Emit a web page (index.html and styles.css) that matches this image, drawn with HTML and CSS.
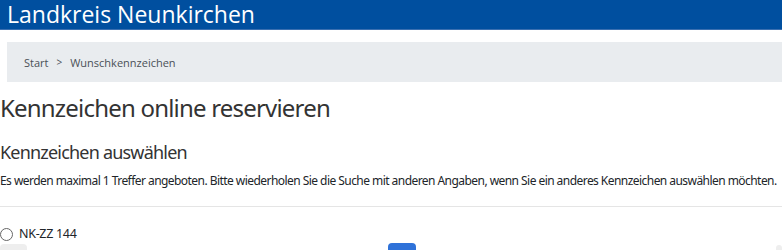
FILE: index.html
```html
<!DOCTYPE html>
<html lang="de">
<head>
	<meta charset="UTF-8"/>
	<meta name="viewport" content="width=device-width, initial-scale=1.0"/>
	<title>Wunschkennzeichen</title>
	<link rel="stylesheet" href="styles.css">
</head>
<body>
	<header class="top">
		<span class="brand">Landkreis Neunkirchen</span>
	</header>

	<nav class="crumbs">
		<a href="#">Start</a>
		<span class="sep">&gt;</span>
		<span>Wunschkennzeichen</span>
	</nav>

	<main class="content">
		<h1>Kennzeichen online reservieren</h1>
		<h2>Kennzeichen auswählen</h2>
		<p class="hint">Es werden maximal 1 Treffer angeboten. Bitte wiederholen Sie die Suche mit anderen Angaben, wenn Sie ein anderes Kennzeichen auswählen möchten.</p>
		<hr>
		<label class="choice"><input type="radio" name="kz"> NK-ZZ 144</label>
		<div class="actions">
			<button class="btn-back">&nbsp;</button>
			<button class="btn-go">&nbsp;</button>
			<button class="btn-side">&nbsp;</button>
		</div>
	</main>
</body>
</html>
```

FILE: styles.css
```css
*{
	margin: 0;
	padding: 0;
	box-sizing: border-box;
}
body{
	font-family: "Noto Sans", "Open Sans", sans-serif;
	color: #212529;
	overflow: hidden;
	height: 250px;
}
.top{
	background: #004f9f;
	height: 30px;
	padding-left: 7px;
	border-bottom: 1px solid #3a6fb0;
}
.brand{
	color: #fff;
	font-family: "Open Sans", sans-serif;
	font-size: 23px;
	line-height: 29px;
}
.crumbs{
	background: #e9ecef;
	margin: 12px 0 0 7px;
	height: 40px;
	padding: 0 17px;
	display: flex;
	align-items: center;
	gap: 8px;
	font-family: "Open Sans", sans-serif;
	font-size: 11px;
	color: #495057;
}
.crumbs a{
	color: #495057;
	text-decoration: none;
}
.sep{
	font-size: 10px;
}
.content{
	padding-top: 11px;
}
h1{
	font-size: 24px;
	font-weight: 400;
	color: #333;
	line-height: 30px;
	letter-spacing: -0.8px;
}
h2{
	font-size: 18px;
	font-weight: 400;
	color: #333;
	margin-top: 17px;
	line-height: 24px;
	letter-spacing: -0.8px;
}
.hint{
	font-size: 12px;
	margin-top: 8px;
	line-height: 18px;
	letter-spacing: -0.55px;
	white-space: nowrap;
}
hr{
	border: 0;
	border-top: 1px solid #e5e5e5;
	margin-top: 16px;
}
.choice{
	display: flex;
	align-items: center;
	gap: 6px;
	font-size: 12.5px;
	line-height: 18px;
	margin-top: 18px;
	letter-spacing: -0.3px;
}
.choice input{
	appearance: none;
	width: 13px;
	height: 13px;
	margin: 0;
	border: 1px solid #666;
	border-radius: 50%;
	background: #fff;
}
.actions{
	display: flex;
	justify-content: space-between;
}
.btn-back, .btn-go, .btn-side{
	border: 0;
	height: 30px;
	border-radius: 4px;
}
.btn-back{
	width: 27px;
	background: #eeeeee;
	margin-top: 1px;
}
.btn-go{
	width: 28px;
	background: #2f72d9;
}
.btn-side{
	width: 6px;
	background: #eeeeee;
	margin-top: 2px;
}
```
